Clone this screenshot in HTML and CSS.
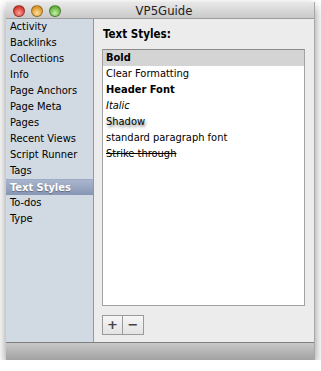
FILE: index.html
```html
<!DOCTYPE html>
<html lang="en">
<head>
  <meta charset="UTF-8" />
  <title>VP5Guide</title>
  <link rel="stylesheet" href="styles.css">
</head>
<body>
  <div class="window">
    <div class="titlebar">
      <div class="lights">
        <span class="light red"></span>
        <span class="light amber"></span>
        <span class="light green"></span>
      </div>
      <div class="title">VP5Guide</div>
    </div>

    <div class="content">
      <ul class="sidebar">
        <li>Activity</li>
        <li>Backlinks</li>
        <li>Collections</li>
        <li>Info</li>
        <li>Page Anchors</li>
        <li>Page Meta</li>
        <li>Pages</li>
        <li>Recent Views</li>
        <li>Script Runner</li>
        <li>Tags</li>
        <li class="selected">Text Styles</li>
        <li>To-dos</li>
        <li>Type</li>
      </ul>

      <div class="main">
        <h2>Text Styles:</h2>
        <ul class="styles-list">
          <li class="row active bold">Bold</li>
          <li class="row">Clear Formatting</li>
          <li class="row bold">Header Font</li>
          <li class="row italic">Italic</li>
          <li class="row shadow">Shadow</li>
          <li class="row">standard paragraph font</li>
          <li class="row strike">Strike through</li>
        </ul>
        <div class="buttons">
          <button class="btn">+</button><button class="btn">&minus;</button>
        </div>
      </div>
    </div>

    <div class="bottombar"></div>
  </div>
</body>
</html>
```

FILE: styles.css
```css
* {
  box-sizing: border-box;
}

body {
  margin: 0;
  padding: 2px 6px 0;
  background: #fff;
  font-family: 'DejaVu Sans Condensed', 'DejaVu Sans', sans-serif;
  font-stretch: condensed;
  font-size: 11px;
  color: #000;
}

.window {
  width: 309px;
  height: 358px;
  display: flex;
  flex-direction: column;
  border-right: 1px solid #a8a8a8;
  box-shadow: 0 5px 10px rgba(0, 0, 0, 0.45);
}

.titlebar {
  height: 17px;
  position: relative;
  background: linear-gradient(#e9e9e9, #c9c9c9);
  border-bottom: 1px solid #9d9d9d;
  display: flex;
  align-items: center;
  justify-content: center;
}

.lights {
  position: absolute;
  left: 7px;
  top: 3px;
  display: flex;
  gap: 6px;
}

.light {
  width: 12px;
  height: 12px;
  border-radius: 50%;
  border: 1px solid rgba(0, 0, 0, 0.3);
}

.red { background: radial-gradient(circle at 50% 70%, #ff9f95, #d23a2e 70%); }
.amber { background: radial-gradient(circle at 50% 70%, #ffe2a0, #d99225 70%); }
.green { background: radial-gradient(circle at 50% 70%, #c5f2a8, #5fae3a 70%); }

.title {
  font-size: 13px;
  color: #222;
  margin-left: 8px;
}

.content {
  flex: 1;
  display: flex;
  min-height: 0;
}

.sidebar {
  list-style: none;
  margin: 0;
  padding: 0;
  width: 89px;
  background: #d1d9e2;
  border-right: 1px solid #989898;
}

.sidebar li {
  height: 16px;
  line-height: 16px;
  padding-left: 4px;
  white-space: nowrap;
}

.sidebar li.selected {
  background: linear-gradient(#a9b5cd, #8796b4);
  border-top: 1px solid #9eabc5;
  color: #fff;
  font-weight: 600;
  line-height: 15px;
  text-shadow: 0 1px 1px rgba(0, 0, 0, 0.35);
}

.main {
  flex: 1;
  background: #ececec;
  padding: 9px 9px 0 8px;
  display: flex;
  flex-direction: column;
}

h2 {
  margin: 0 0 9px;
  font-size: 11.5px;
  font-weight: bold;
  line-height: 12px;
  padding-left: 1px;
}

.styles-list {
  list-style: none;
  margin: 0;
  padding: 0;
  height: 257px;
  width: 203px;
  background: #fff;
  border: 1px solid #a2a2a2;
  border-top-color: #8a8a8a;
}

.row {
  height: 16px;
  line-height: 16px;
  padding-left: 3px;
  white-space: nowrap;
}

.row.active {
  background: #d4d4d4;
}

.bold { font-weight: bold; }
.italic { font-style: italic; }
.shadow { text-shadow: 1px 2px 3px rgba(0, 0, 0, 0.55); }
.strike { text-decoration: line-through; }

.buttons {
  display: flex;
  margin-top: 9px;
}

.btn {
  width: 21px;
  height: 20px;
  padding: 0;
  margin: 0;
  border: 1px solid #9a9a9a;
  background: linear-gradient(#f6f6f6, #e3e3e3);
  font-family: 'DejaVu Sans', sans-serif;
  font-size: 13px;
  font-weight: bold;
  color: #444;
  line-height: 16px;
}

.btn + .btn {
  border-left: none;
}

.bottombar {
  height: 18px;
  background: linear-gradient(#c8c8c8, #a2a2a2);
  border-top: 1px solid #7f7f7f;
}
```
